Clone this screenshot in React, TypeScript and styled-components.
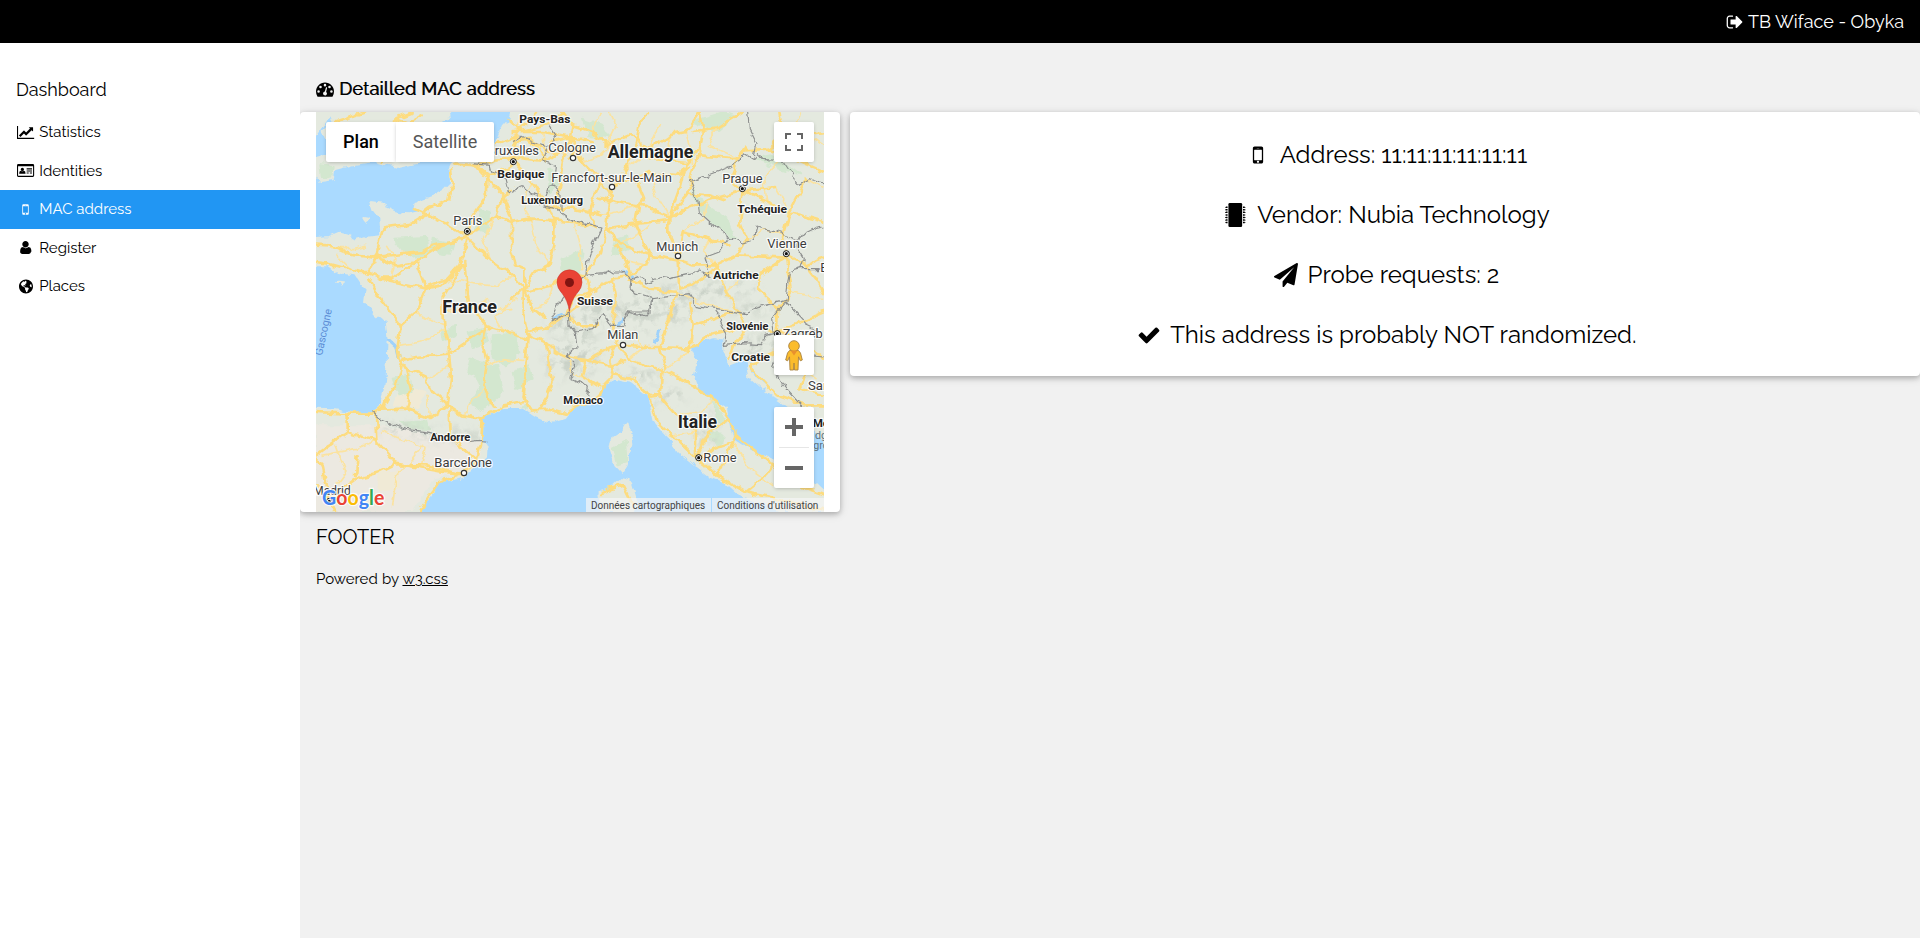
import React from "react";
import styled, { createGlobalStyle, css } from "styled-components";
import { FaGlobeAmericas } from "react-icons/fa";

const GlobalStyle = createGlobalStyle`
  *, *::before, *::after { box-sizing: border-box; }
  html, body { margin: 0; height: 100%; background: #f1f1f1; }
  body {
    font-family: Raleway, Lato, sans-serif;
    font-size: 15px;
    line-height: 1.5;
    color: #000;
    overflow: hidden;
  }
  #root { height: 100%; }
`;

const Page = styled.div`
  display: flex;
  flex-direction: column;
  height: 100%;
`;

const TopBar = styled.header`
  display: flex;
  justify-content: flex-end;
  height: 43px;
  padding: 8px 16px;
  background: #000;
  color: #fff;
  font-size: 18px;
`;

const Account = styled.span`
  display: flex;
  align-items: center;
  gap: 5px;
`;

const Body = styled.div`
  display: flex;
  flex: 1;
  min-height: 0;
`;

const Sidebar = styled.nav`
  position: relative;
  z-index: 1;
  width: 300px;
  flex: none;
  background: #fff;
  padding-top: 23px;
`;

const SidebarTitle = styled.h5`
  margin: 10px 0;
  padding: 0 16px;
  font-size: 18px;
  line-height: 27px;
  font-weight: 400;
`;

const MenuItem = styled.a<{ $active?: boolean }>`
  display: flex;
  align-items: center;
  gap: 4px;
  height: 38.5px;
  padding: 0 16px;
  ${(p) =>
    p.$active &&
    css`
      background: #2196f3;
      color: #fff;
    `}
`;

const IconBox = styled.span<{ $size: number; $width?: number }>`
  display: inline-flex;
  justify-content: center;
  align-items: center;
  flex: none;
  width: ${(p) => p.$width ?? p.$size * 1.2857}px;
  height: ${(p) => p.$size}px;
  svg {
    display: block;
    height: ${(p) => p.$size}px;
    fill: currentColor;
    overflow: visible;
  }
`;

const Main = styled.main`
  flex: 1;
  min-width: 0;
`;

const Heading = styled.h5`
  display: flex;
  align-items: center;
  gap: 5px;
  margin: 0;
  padding: 32px 16px 10px;
  height: 69px;
  font-size: 18px;
  line-height: 27px;
  font-weight: 400;
  letter-spacing: 0.28px;
  text-shadow: 0.7px 0 0 #000;
`;

const Row = styled.section`
  display: flex;
  align-items: flex-start;
  gap: 10px;
`;

const Card = styled.div`
  background: #fff;
  border-radius: 4px;
  box-shadow: 0 2px 5px 0 rgba(0, 0, 0, 0.2), 0 2px 10px 0 rgba(0, 0, 0, 0.15);
`;

const MapCard = styled(Card)`
  width: 540px;
  height: 400px;
  padding: 0 16px;
`;

const InfoCard = styled(Card)`
  flex: 1;
  height: 264px;
  padding-top: 25px;
`;

const InfoLine = styled.p`
  display: flex;
  justify-content: center;
  align-items: center;
  gap: 6px;
  height: 36px;
  margin: 0 0 24px;
  font-size: 24px;
  white-space: nowrap;
`;

const Footer = styled.footer`
  padding: 10px 16px;
`;

const FooterTitle = styled.h4`
  margin: 0 0 12px;
  font-size: 20px;
  line-height: 30px;
  font-weight: 400;
`;

const FooterText = styled.p`
  margin: 16px 0;
  word-spacing: 0.4px;
  a { color: inherit; text-decoration: underline; }
`;

/* Map frame and its controls */

const MapFrame = styled.div`
  position: relative;
  width: 508px;
  height: 400px;
  overflow: hidden;
  font-family: Roboto, Arial, sans-serif;
`;

const MapDrawing = styled.svg`
  display: block;
  width: 508px;
  height: 400px;
`;

const Control = styled.div`
  position: absolute;
  right: 10px;
  width: 40px;
  display: flex;
  flex-direction: column;
  align-items: center;
  justify-content: center;
  background: #fff;
  border-radius: 2px;
  box-shadow: 0 1px 4px -1px rgba(0, 0, 0, 0.3);
  svg { display: block; }
`;

const FullscreenControl = styled(Control)`
  top: 10px;
  height: 40px;
`;

const PegmanControl = styled(Control)`
  top: 223px;
  height: 40px;
`;

const ZoomControl = styled(Control)`
  top: 295px;
  height: 81px;
`;

const ZoomButton = styled.div`
  display: flex;
  align-items: center;
  justify-content: center;
  height: 40px;
`;

const ZoomDivider = styled.div`
  width: 30px;
  height: 1px;
  background: #e6e6e6;
`;

const TypeControl = styled.div`
  position: absolute;
  left: 10px;
  top: 10px;
  display: flex;
  height: 40px;
  font-size: 18px;
  line-height: 40px;
`;

const TypeButton = styled.div<{ $selected?: boolean }>`
  width: ${(p) => (p.$selected ? 70 : 98)}px;
  text-align: center;
  background: #fff;
  color: ${(p) => (p.$selected ? "#000" : "#565656")};
  font-weight: ${(p) => (p.$selected ? 500 : 400)};
  border-radius: ${(p) => (p.$selected ? "2px 0 0 2px" : "0 2px 2px 0")};
  box-shadow: 0 1px 4px -1px rgba(0, 0, 0, 0.3);
`;

const Attribution = styled.div`
  position: absolute;
  right: 0;
  bottom: 0;
  display: flex;
  gap: 1px;
  height: 14px;
  font-size: 10px;
  line-height: 15px;
  color: #444;
  white-space: nowrap;
`;

const AttributionItem = styled.span<{ $width: number }>`
  width: ${(p) => p.$width}px;
  padding-left: 5px;
  background: rgba(245, 245, 245, 0.7);
`;

/* Icons */

const Glyph = ({ d, w = 1792 }: { d: string; w?: number }) => (
  <svg viewBox={`0 0 ${w} 1792`}>
    <path fillRule="evenodd" d={d} />
  </svg>
);

const dot = (x: number, y: number, r = 128) =>
  `M${x - r} ${y}a${r} ${r} 0 1 0 ${2 * r} 0a${r} ${r} 0 1 0 ${-2 * r} 0z`;

const CHART =
  "M2048 1536v128h-2048v-1536h128v1408h1920zm-128-1248v435q0 21-19.5 29.5t-35.5-7.5l-121-121-633 633q-10 10-23 10t-23-10l-233-233-416 416-192-192 585-585q10-10 23-10t23 10l233 233 464-464-121-121q-16-16-7.5-35.5t29.5-19.5h435q14 0 23 9t9 23z";
const MOBILE =
  "M976 1408q0-33-23.5-56.5t-56.5-23.5-56.5 23.5-23.5 56.5 23.5 56.5 56.5 23.5 56.5-23.5 23.5-56.5zm208-160v-704q0-13-9.5-22.5t-22.5-9.5h-512q-13 0-22.5 9.5t-9.5 22.5v704q0 13 9.5 22.5t22.5 9.5h512q13 0 22.5-9.5t9.5-22.5zm-192-848q0-16-16-16h-160q-16 0-16 16t16 16h160q16 0 16-16zm288-16v1024q0 52-38 90t-90 38h-512q-52 0-90-38t-38-90v-1024q0-52 38-90t90-38h512q52 0 90 38t38 90z";
const USER =
  "M1536 1405q0 120-73 189.500t-194 69.500h-746q-121 0-194-69.500t-73-189.500q0-53 3.500-103.500t14-109 26.500-108.500 43-97.500 62-81 85.500-53.500 111.500-20q9 0 42 21.500t74.500 48 108 48 69.500 21.500 133.500-21.500 108-48 74.500-48 42-21.500q61 0 111.500 20t85.500 53.500 62 81 43 97.500 26.500 108.500 14 109 3.500 103.500zm-256-893q0 159-112.500 271.500t-271.500 112.500-271.500-112.500-112.500-271.500 112.500-271.500 271.500-112.500 271.500 112.500 112.500 271.500z";
const GAUGE =
  "M1792 1152q0 261-141 483-19 29-54 29h-1402q-35 0-54-29-141-221-141-483 0-182 71-348t191-286 286-191 348-71 348 71 286 191 191 286 71 348z" +
  "M1004 1185l101-382q6-26-7.5-48.5t-38.5-29.5-48 6.5-30 39.5l-101 382q-60 5-107 43.5t-63 98.5q-20 77 20 146t117 89 146-20 89-117q16-60-6-117t-72-91z" +
  dot(256, 1152) + dot(448, 704) + dot(896, 512) + dot(1344, 704) + dot(1536, 1152);
const PLANE =
  "M1764 11q33 24 27 64l-256 1536q-5 29-32 45-14 8-31 8-11 0-24-5l-453-185-242 295q-18 23-49 23-13 0-22-4-19-7-30.5-23.5t-11.5-36.500v-349l864-1059-1069 925-395-162q-37-14-40-55-2-40 32-59l1664-960q15-9 32-9 20 0 36 11z";
const CHECK =
  "M1671 566q0 40-28 68l-724 724-136 136q-28 28-68 28t-68-28l-136-136-362-362q-28-28-28-68t28-68l136-136q28-28 68-28t68 28l294 295 656-657q28-28 68-28t68 28l136 136q28 28 28 68z";
const LOGOUT =
  "M704 1440q0 4 1 20t.5 26.500-3 23.500-10 19.500-20.500 6.500h-320q-119 0-203.500-84.500t-84.500-203.500v-704q0-119 84.500-203.500t203.500-84.500h320q13 0 22.500 9.500t9.500 22.500q0 4 1 20t.5 26.500-3 23.500-10 19.500-20.500 6.500h-320q-66 0-113 47t-47 113v704q0 66 47 113t113 47h312l11.500 1 11.500 3 8 5.500 7 9 2 13.500zm928-544q0 26-19 45l-544 544q-19 19-45 19t-45-19-19-45v-288h-448q-26 0-45-19t-19-45v-384q0-26 19-45t45-19h448v-288q0-26 19-45t45-19 45 19l544 544q19 19 19 45z";

const IdCardIcon = () => (
  <svg viewBox="0 0 2048 1792">
    <path
      fillRule="evenodd"
      d="M160 128h1728q160 0 160 160v1216q0 160-160 160h-1728q-160 0-160-160v-1216q0-160 160-160zM128 384v1120q0 32 32 32h1728q32 0 32-32v-1120z"
    />
    <circle cx="640" cy="768" r="190" />
    <path d="M256 1280q0-340 200-360q184 120 368 0q200 20 200 360z" />
    <path d="M1152 640h640v128h-640zM1152 896h640v110h-640zM1152 1130h250v120h-250zM1530 1130h262v120h-262z" />
  </svg>
);

const ChipIcon = () => (
  <svg viewBox="0 0 1536 1792">
    <rect x="256" y="0" width="1024" height="1792" rx="96" />
    {[256, 448, 640, 832, 1024, 1216, 1408].map((y) => (
      <path key={y} d={`M0 ${y + 40}h64v-40h128v112h-128v-24h-64zM1536 ${y + 40}h-64v-40h-128v112h128v-24h64z`} />
    ))}
  </svg>
);

/* Map data, in thirds of a pixel */

const LAND = [
  "585,0 578,25 560,45 548,75 538,98 505,118 470,138 410,150 403,165 405,215 385,235 345,258 305,272 302,288 325,297 280,307 258,305 235,300 210,290 205,275 165,270 175,300 190,320 193,372 150,378 112,390 100,370 70,362 40,375 0,378 0,460 40,460 75,485 120,490 140,520 155,530 150,570 180,605 212,630 218,680 215,760 205,840 190,890 172,903 120,905 60,895 0,893 0,1200 305,1200 345,1150 365,1110 440,1095 510,1035 512,1000 497,985 500,920 560,885 620,885 660,910 700,927 745,915 760,895 850,855 860,825 895,800 945,810 1000,850 1015,930 1060,980 1090,1020 1140,1060 1180,1090 1230,1110 1280,1155 1320,1165 1400,1200 1524,1200 1524,1145 1480,1105 1420,1080 1370,1045 1310,1020 1255,985 1240,950 1230,890 1190,860 1145,835 1130,790 1140,750 1125,715 1140,690 1200,675 1225,680 1225,720 1245,755 1270,745 1280,720 1310,765 1350,810 1355,840 1400,870 1440,900 1500,960 1524,990 1524,0",
  "0,0 405,0 385,25 350,45 320,80 290,120 303,153 245,165 180,148 110,160 55,175 50,205 10,210 0,190 0,140 40,130 40,110 30,90 20,60 50,30 40,10 0,70",
  "935,935 941,965 946,1000 932,1060 918,1082 895,1058 880,1010 884,985 920,962",
  "925,1098 945,1110 960,1160 955,1200 858,1200 850,1140 890,1130",
  "1290,745 1310,790 1350,825 1340,830 1300,795",
  "70,512 84,514 80,520",
  "145,318 158,320 150,326",
];

const FORESTS = [
  "235,380 330,375 335,425 300,440 240,400", "350,380 410,390 400,425 345,415", "455,660 510,650 520,690 470,705",
  "460,740 510,755 495,790 450,780", "530,670 600,665 610,720 570,760 530,740", "470,770 540,760 560,840 500,895 460,870 490,820",
  "375,655 420,645 420,670 380,690", "590,780 640,760 650,800 600,830", "230,800 280,790 290,840 250,850",
  "740,440 800,420 790,480 735,470", "250,930 330,925 340,955 280,950", "490,290 520,300 515,360 480,350",
  "1130,230 1160,270 1240,330 1260,380 1210,350 1150,290", "800,20 860,40 880,75 820,70", "1230,0 1260,10 1200,60 1130,30",
  "1180,960 1220,965 1215,1000 1180,990", "890,1010 930,990 935,1050 905,1060", "700,170 740,200 700,240", "1320,140 1370,130 1450,190 1390,170",
  "10,160 50,165 45,200 15,195", "590,900 640,880 630,905", "1190,860 1230,930 1210,940", "900,380 930,370 940,410 890,430",
];

const SPAIN = "0,940 200,940 330,970 490,985 495,1030 430,1080 350,1105 290,1200 0,1200";
const PLAINS = ["180,1080 260,1075 250,1130 190,1140", "260,820 330,840 300,890 230,880"];

const HILLS: [number, number, number, number][] = [
  [780, 640, 90, 26], [880, 590, 100, 26], [1000, 580, 90, 32], [1120, 540, 120, 22], [1230, 530, 100, 20], [730, 740, 40, 60],
  [800, 730, 50, 60], [1080, 600, 60, 30], [980, 640, 50, 22], [400, 970, 110, 16], [960, 790, 70, 16], [1050, 850, 60, 20],
  [1170, 950, 30, 50], [1330, 700, 50, 30], [250, 950, 60, 14], [1300, 590, 80, 14],
];

const ROADS = [
  "455,362 470,310 512,250 515,190 480,160 415,155", "455,375 400,340 370,325 300,292", "325,297 340,285 400,262 410,215 405,175",
  "450,375 350,402 320,420 205,432 180,435 100,425 40,400 0,398", "180,435 198,360 210,345 290,335 340,305",
  "180,435 155,480 195,500 225,500 302,450 375,400 450,380", "180,435 240,460 302,450 330,525", "155,480 130,480 40,455 0,450",
  "330,525 395,500 430,460 455,385", "195,500 330,530 380,520 440,460", "330,525 300,600 255,640 245,700 255,745", "160,500 200,570 255,640",
  "445,450 455,570 510,640 560,655 630,680", "460,385 520,440 590,490 620,530 620,600 635,670", "455,370 540,315 585,330 640,320 715,325 770,330 840,345",
  "585,330 585,410 600,460 625,470 625,540", "715,330 715,400 700,460 660,480 625,535", "620,540 710,520 760,480 805,490", "540,315 560,260 590,230",
  "590,560 620,530 650,590 690,620", "635,670 630,740 620,850 650,895", "630,870 560,880 500,920 495,1000 480,1050 440,1085",
  "640,670 690,690 720,720 750,735 815,745", "640,660 680,650 710,632 750,605 770,560 820,540", "690,690 700,760 710,800 690,860 670,890",
  "620,850 650,895 700,893 745,905 800,880 850,852 865,820 895,790 960,805 1000,850 1015,890 1025,930 1090,990 1140,1040 1200,1090 1290,1140 1380,1160 1524,1195",
  "255,745 270,770 330,800 350,840 395,880 440,910 500,920", "395,880 345,918 270,890 190,893", "260,750 240,820 190,893 170,905 90,905 0,900",
  "395,880 405,800 397,690 385,640 380,560 440,460", "255,745 300,735 400,725 510,650", "510,640 500,700 515,760 505,820 530,880", "270,770 285,830 275,885",
  "95,910 95,960 180,985 240,1055 370,1078 440,1085", "95,960 40,1000 0,1030", "40,1160 120,1100 180,1085 240,1055", "180,905 185,1000", "440,1085 370,1112 340,1150 310,1200",
  "40,1160 0,1120", "40,1160 60,1200", "440,1085 480,1040 405,980 400,885", "240,1060 330,1060 440,1090", "40,1160 20,1060 0,1040", "120,1090 125,1030",
  "590,135 480,162", "590,135 690,148 770,80", "590,145 650,210 700,290 715,325", "590,135 605,60 640,30 660,0", "590,60 680,60 770,75", "585,95 640,80 700,120 770,120",
  "515,190 580,170 590,135", "575,20 620,60 690,40 740,0", "540,95 600,70 660,100 690,150", "700,290 770,290 860,310", "480,165 560,250 590,330",
  "770,40 830,60 870,100 940,70 1000,110 1060,70 1110,60 1150,0", "770,75 800,150 850,200 882,245", "770,75 740,150 730,240 720,290", "740,0 770,40 760,80 790,110 760,140", "700,90 760,75 830,85",
  "882,245 930,170 960,100 970,40 1000,0", "882,245 870,350 855,420 820,470 808,490", "870,350 960,335 1050,325 1120,245 1125,190 1150,120",
  "860,200 830,260 820,300 840,345", "850,260 900,270 970,280 1060,315 1180,265 1280,235", "880,350 910,395 1000,430 1085,445", "1085,430 1060,380 1060,315 1090,230 1110,150 1150,110 1160,40 1150,0",
  "880,200 940,210 1000,180 1090,190 1120,160", "960,110 1000,140 1110,150", "900,400 930,450 940,490", "1000,430 990,460 945,485", "960,200 985,260 970,280 960,340 1000,430",
  "1085,445 1130,460 1200,460 1260,430 1410,437", "1120,245 1180,250 1225,265", "1085,445 1100,360 1180,380 1240,400", "1200,460 1230,540 1270,600 1290,640",
  "1410,437 1330,490 1330,540 1390,590 1385,655", "1410,437 1425,540 1390,590", "1280,235 1350,270 1420,300 1400,370 1412,430", "1280,235 1240,200 1260,150 1290,110", "1290,235 1380,225", "1280,235 1270,330 1290,380 1260,430",
  "1150,130 1270,140 1290,115 1360,110 1400,75 1524,60", "1130,60 1200,50 1280,0", "1360,110 1410,130 1524,180", "1400,75 1390,0", "1420,300 1450,240 1470,200", "1420,300 1524,330", "1412,430 1470,460 1524,440", "1460,450 1500,500 1524,540",
  "1085,445 1090,530 1130,520 1200,470", "940,500 1000,530 1080,540 1060,620 1035,700", "900,700 980,705 1035,705 1120,710 1180,670 1230,655 1290,640 1385,660 1524,600",
  "815,745 860,720 900,700", "900,700 940,740 1040,775 1130,820 1200,865 1240,920 1260,970 1370,1060 1470,1130 1524,1150", "1040,775 1030,850 1080,910 1140,960 1140,1040",
  "1030,850 1000,855", "895,700 880,740 890,790", "815,745 800,790 850,825", "820,745 890,760 930,745", "710,632 760,600", "755,605 780,640 840,640", "820,540 890,500 940,492", "808,490 820,540 800,570 760,600",
  "890,500 900,560 890,620 905,700", "1035,705 1050,770", "1120,710 1130,640 1200,620 1250,600", "1130,640 1120,570", "1290,640 1260,690 1240,740", "1385,660 1380,720 1300,760", "1300,760 1380,850 1470,880 1524,880",
  "1140,1050 1190,1010 1250,990", "1200,1090 1230,1040 1260,970", "1140,1040 1180,960 1240,920", "1385,655 1450,680 1524,740", "1480,760 1450,830 1524,850", "1290,1140 1340,1100 1370,1060",
  "190,60 240,20 290,0", "240,20 330,60", "40,120 110,140 200,80 320,10", "40,120 60,30 150,0", "200,150 230,100 300,80", "860,1140 920,1120 950,1180",
];

const LANES = [
  "40,410 110,410 150,400", "100,470 60,430", "225,500 240,440 215,400", "395,500 455,510 540,520 590,490", "380,600 455,590 520,560", "455,570 500,600 590,590", "300,600 385,640", "245,700 320,690 385,650",
  "515,760 560,740 620,745", "330,800 400,760", "345,918 330,850", "440,910 470,860 510,830", "560,655 540,620 600,560", "540,315 500,380 520,440", "640,320 620,270 650,210", "650,590 700,560 710,520", "200,960 330,1010 320,1060",
  "60,1000 90,1080 60,1120", "320,1000 240,1100 230,1180", "20,1030 120,1010 180,985", "700,460 660,400 640,320", "770,330 790,400 800,470", "800,150 850,130 880,100", "930,170 1000,120", "1000,180 1020,250 1060,315",
  "910,395 960,370 1000,340", "930,450 980,460", "1100,360 1160,320 1180,265", "1200,460 1160,420 1180,380", "1350,270 1340,200 1410,130", "1290,380 1350,350 1400,370", "1330,490 1270,500 1230,540", "1380,225 1400,260 1420,300",
  "1470,200 1524,230", "1425,540 1524,560", "1080,540 1180,580 1270,600", "980,705 960,660", "1050,770 1090,740 1120,710", "940,740 980,705", "1080,910 1150,900 1200,865", "1140,960 1060,970", "1250,990 1300,1070 1370,1120", "860,310 900,300 970,280",
  "680,60 690,150", "1060,70 1060,150", "1110,60 1130,150", "830,60 850,0", "870,100 900,40 880,0", "1000,110 1030,40", "750,735 770,780 810,800", "1450,680 1440,760 1500,800", "1200,50 1180,100 1270,140", "1450,0 1440,40 1524,100", "760,895 790,850", "610,20 590,100 640,130",
];

const BORDERS = [
  "478,155 520,160 525,180 570,200 580,240 620,225 635,238 670,250 665,280 720,292 770,325 855,345 830,400 812,450 810,490 870,485 880,470 895,480 920,480 945,500 942,530 955,545 990,555 1010,560 1005,600 930,600 920,625",
  "700,40 720,70 700,100 680,150 715,160 710,220 735,250 735,290", "595,85 620,75 650,90 690,100", "690,250 700,222 720,225",
  "810,490 780,510 740,560 705,630 760,600 762,640 775,660 830,650 860,605 885,640 920,640 935,600 985,615 1010,580",
  "775,660 780,710 750,735 775,760 765,800 820,825 815,850", "172,900 200,925 270,955 345,965 400,975 445,990 480,985 510,987",
  "1295,0 1300,50 1320,90 1310,140 1290,128 1275,145 1250,160 1200,180 1120,210 1145,260 1150,300 1215,360 1240,375 1280,390 1310,380 1320,345 1370,355 1430,375 1450,410",
  "1310,140 1325,125 1340,145 1400,150 1430,195 1450,220 1480,200 1524,215", "1240,375 1210,420 1170,435 1185,490 1150,480 1060,500 1030,495 990,510 960,490 945,500",
  "1010,560 1120,545 1140,580 1200,590 1290,605 1350,580 1410,565 1420,480 1455,470 1465,440 1440,400 1450,375 1500,350 1524,345", "1455,470 1510,470",
  "1200,595 1220,620 1210,640 1230,670 1225,700", "1225,700 1280,695 1340,698 1350,670 1375,665 1370,620 1410,570", "1410,570 1470,635 1524,660", "1524,735 1470,730 1380,735 1370,765 1400,820 1460,885",
];

const LABELS: { t: string; x: number; y: number; w: number; s: number; b?: boolean }[] = [
  { t: "Pays-Bas", x: 610, y: 33, w: 153, s: 35, b: true },
  { t: "Allemagne", x: 875, y: 138, w: 257, s: 53, b: true },
  { t: "Bruxelles", x: 512, y: 128, w: 157, s: 39 },
  { t: "Belgique", x: 544, y: 198, w: 141, s: 35, b: true },
  { t: "Cologne", x: 697, y: 119, w: 143, s: 39 },
  { t: "Francfort-sur-le-Main", x: 706, y: 209, w: 362, s: 39 },
  { t: "Luxembourg", x: 616, y: 276, w: 185, s: 35, b: true },
  { t: "Paris", x: 412, y: 338, w: 87, s: 39 },
  { t: "Munich", x: 1021, y: 416, w: 126, s: 39 },
  { t: "Prague", x: 1219, y: 212, w: 121, s: 39 },
  { t: "Tchéquie", x: 1264, y: 304, w: 149, s: 35, b: true },
  { t: "Vienne", x: 1354, y: 407, w: 118, s: 39 },
  { t: "Autriche", x: 1192, y: 502, w: 136, s: 35, b: true },
  { t: "France", x: 379, y: 603, w: 164, s: 53, b: true },
  { t: "Suisse", x: 783, y: 579, w: 108, s: 35, b: true },
  { t: "Milan", x: 874, y: 680, w: 93, s: 39 },
  { t: "Slovénie", x: 1231, y: 654, w: 126, s: 35, b: true },
  { t: "Zagreb", x: 1400, y: 679, w: 120, s: 39 },
  { t: "Croatie", x: 1246, y: 747, w: 116, s: 35, b: true },
  { t: "Monaco", x: 742, y: 876, w: 119, s: 35, b: true },
  { t: "Italie", x: 1085, y: 948, w: 118, s: 53, b: true },
  { t: "Rome", x: 1162, y: 1049, w: 100, s: 39 },
  { t: "Andorre", x: 343, y: 987, w: 120, s: 35, b: true },
  { t: "Barcelone", x: 355, y: 1064, w: 173, s: 39 },
  { t: "Madrid", x: -8, y: 1150, w: 112, s: 37 },
  { t: "Sarajevo", x: 1476, y: 833, w: 150, s: 37 },
  { t: "Monténégro", x: 1490, y: 945, w: 190, s: 33, b: true },
  { t: "B", x: 1513, y: 479, w: 24, s: 37 },
];

const CAPITALS = [[592, 149], [454, 358], [1279, 230], [1411, 425], [1384, 665], [1148, 1037], [40, 1168]];
const CITIES = [[771, 138], [888, 225], [1086, 432], [921, 699], [444, 1083]];

const Lines = ({ items, ...rest }: { items: string[] } & React.SVGProps<SVGGElement>) => (
  <g fill="none" strokeLinejoin="round" strokeLinecap="round" {...rest}>
    {items.map((points) => (
      <polyline key={points} points={points} />
    ))}
  </g>
);

const EuropeMap = () => (
  <MapDrawing viewBox="0 0 1524 1200" preserveAspectRatio="none">
    <defs>
      <filter id="rough" filterUnits="userSpaceOnUse" x="-40" y="-40" width="1604" height="1280" colorInterpolationFilters="sRGB">
        <feTurbulence type="fractalNoise" baseFrequency="0.03" numOctaves="3" seed="4" />
        <feDisplacementMap in="SourceGraphic" scale="24" xChannelSelector="R" yChannelSelector="G" />
      </filter>
      <filter id="relief" filterUnits="userSpaceOnUse" x="0" y="0" width="1524" height="1200" colorInterpolationFilters="sRGB">
        <feTurbulence type="fractalNoise" baseFrequency="0.035" numOctaves="3" seed="9" result="n" />
        <feColorMatrix in="n" values="0 0 0 0 0.79  0 0 0 0 0.82  0 0 0 0 0.78  4 0 0 0 -1.8" result="shade" />
        <feGaussianBlur in="SourceAlpha" stdDeviation="12" result="soft" />
        <feComposite in="shade" in2="soft" operator="in" />
      </filter>
      <clipPath id="land">
        {LAND.map((p) => (
          <polygon key={p} points={p} />
        ))}
      </clipPath>
    </defs>
    <rect width="1524" height="1200" fill="#aadaff" />
    <g filter="url(#rough)">
      <g fill="#e4e9df" stroke="#e4e9df" strokeWidth="6" strokeLinejoin="round">
        {LAND.map((p) => (
          <polygon key={p} points={p} />
        ))}
        <path d="M1524 0h40v1000h-40zM1524 1145h40v60h-40zM-40 380h40v80h-40zM-40 895h40v345h-40zM0 1200h300v40h-300zM585 0v-40h940v40zM0 0v-40h405v40z" />
      </g>
      <g clipPath="url(#land)">
        <polygon points={SPAIN} fill="#ece9e1" />
        {PLAINS.map((p) => (
          <polygon key={p} points={p} fill="#f0ead6" />
        ))}
        {FORESTS.map((p) => (
          <polygon key={p} points={p} fill="#d3e7cf" strokeLinejoin="round" stroke="#d3e7cf" strokeWidth="6" />
        ))}
        <g filter="url(#relief)">
          {HILLS.map(([x, y, rx, ry]) => (
            <ellipse key={`${x}-${y}`} cx={x} cy={y} rx={rx} ry={ry} />
          ))}
        </g>
      </g>
      <path
        d="M925 478l28 16M712 628q20-28 48-24M1018 695l10-48M215 680l30 28l8 30M905 640l15-22"
        fill="none"
        stroke="#9fd2fb"
        strokeWidth="9"
      />
      <Lines items={LANES} stroke="#fbe3a0" strokeWidth={5} />
      <Lines items={ROADS} stroke="#fddc7f" strokeWidth={8} />
      <Lines items={BORDERS} stroke="#8d8f8e" strokeWidth={3.4} />
    </g>

    {CITIES.map(([x, y]) => (
      <circle key={x} cx={x} cy={y} r="8" fill="#fff" stroke="#333" strokeWidth="3.5" />
    ))}
    {CAPITALS.map(([x, y]) => (
      <g key={x}>
        <circle cx={x} cy={y} r="9" fill="#fff" stroke="#111" strokeWidth="3" />
        <circle cx={x} cy={y} r="4.8" fill="#111" />
      </g>
    ))}
    <g fontFamily="Roboto, Arial, sans-serif" paintOrder="stroke" stroke="#fff" strokeOpacity="0.85" strokeWidth="7" strokeLinejoin="round">
      {LABELS.map((l) => (
        <text
          key={l.t}
          x={l.x}
          y={l.y}
          fontSize={l.s}
          fontWeight={l.b ? 700 : 400}
          fill={l.b ? "#222" : "#3c3c3c"}
          textLength={l.w}
          lengthAdjust="spacingAndGlyphs"
        >
          {l.t}
        </text>
      ))}
    </g>
    <g fontFamily="Roboto, Arial, sans-serif" fill="#5c8dd6">
      <text fontSize="32" textLength="142" transform="translate(18 732) rotate(-78)">
        Gascogne
      </text>
    </g>
    <g fontFamily="Roboto, Arial, sans-serif" fontSize="32" fill="#5f7480">
      <text x="1497" y="982">dgorica</text>
      <text x="1492" y="1010">grca</text>
    </g>

    <path
      d="M760 598Q756 566 738 544Q723 528 723 511A37.500 37.500 0 0 1 798 511Q798 528 783 544Q765 566 760 598Z"
      fill="#ea4335"
      stroke="#c5332b"
      strokeWidth="1.5"
    />
    <circle cx="760.5" cy="511.500" r="13.500" fill="#811411" />

    <text
      x="18"
      y="1178"
      fontFamily="Lato, sans-serif"
      fontSize="60"
      fontWeight="700"
      textLength="187"
      lengthAdjust="spacingAndGlyphs"
      paintOrder="stroke"
      stroke="#fff"
      strokeOpacity="0.8"
      strokeWidth="7"
    >
      <tspan fill="#4285f4">G</tspan>
      <tspan fill="#ea4335">o</tspan>
      <tspan fill="#fbbc05">o</tspan>
      <tspan fill="#4285f4">g</tspan>
      <tspan fill="#34a853">l</tspan>
      <tspan fill="#ea4335">e</tspan>
    </text>
  </MapDrawing>
);

const PegmanIcon = () => (
  <svg width="18" height="31" viewBox="0 0 18 31">
    <g fill="#fbbc2c" stroke="#a98240" strokeWidth="0.9" strokeLinejoin="round">
      <path d="M4.500 10.500h9l2 2.500l1.800 7l-2 .8l-1.800-4l-.5 13.200h-3.500l-.5-7l-.5 7h-3.500l-.5-13.200l-1.800 4l-2-.8l1.800-7z" />
      <circle cx="9" cy="6" r="5.300" />
    </g>
    <path d="M5.500 10.500h7l-3.500 5z" fill="#e8912d" />
  </svg>
);

const MENU: { label: string; icon: React.ReactNode; active?: boolean }[] = [
  { label: "Statistics", icon: <Glyph d={CHART} w={2048} /> },
  { label: "Identities", icon: <IdCardIcon /> },
  { label: "MAC address", icon: <Glyph d={MOBILE} />, active: true },
  { label: "Register", icon: <Glyph d={USER} /> },
  { label: "Places", icon: <FaGlobeAmericas size={14} /> },
];

const DETAILS: { text: string; icon: React.ReactNode }[] = [
  { text: "Address: 11:11:11:11:11:11", icon: <Glyph d={MOBILE} /> },
  { text: "Vendor: Nubia Technology", icon: <ChipIcon /> },
  { text: "Probe requests: 2", icon: <Glyph d={PLANE} /> },
  { text: "This address is probably NOT randomized.", icon: <Glyph d={CHECK} /> },
];

export default function App() {
  return (
    <Page>
      <GlobalStyle />
      <TopBar>
        <Account>
          <IconBox $size={18} $width={17}>
            <Glyph d={LOGOUT} w={1664} />
          </IconBox>
          TB Wiface - Obyka
        </Account>
      </TopBar>
      <Body>
        <Sidebar>
          <SidebarTitle>Dashboard</SidebarTitle>
          {MENU.map((item) => (
            <MenuItem key={item.label} $active={item.active}>
              <IconBox $size={15}>{item.icon}</IconBox>
              {item.label}
            </MenuItem>
          ))}
        </Sidebar>
        <Main>
          <Heading>
            <IconBox $size={18} $width={18}>
              <Glyph d={GAUGE} />
            </IconBox>
            Detailled MAC address
          </Heading>
          <Row>
            <MapCard>
              <MapFrame>
                <EuropeMap />
                <TypeControl>
                  <TypeButton $selected>Plan</TypeButton>
                  <TypeButton>Satellite</TypeButton>
                </TypeControl>
                <FullscreenControl>
                  <svg width="18" height="18" viewBox="0 0 18 18" fill="#666">
                    <path d="M0 0v6h2V2h4V0zM16 0h-4v2h4v4h2V0zM16 16h-4v2h6v-6h-2zM2 12H0v6h6v-2H2z" />
                  </svg>
                </FullscreenControl>
                <PegmanControl>
                  <PegmanIcon />
                </PegmanControl>
                <ZoomControl>
                  <ZoomButton>
                    <svg width="18" height="18" viewBox="0 0 18 18" fill="#666">
                      <path d="M18 7h-7V0H7v7H0v4h7v7h4v-7h7z" />
                    </svg>
                  </ZoomButton>
                  <ZoomDivider />
                  <ZoomButton>
                    <svg width="18" height="18" viewBox="0 0 18 18" fill="#666">
                      <path d="M0 7h18v4H0z" />
                    </svg>
                  </ZoomButton>
                </ZoomControl>
                <Attribution>
                  <AttributionItem $width={125}>Données cartographiques</AttributionItem>
                  <AttributionItem $width={112}>Conditions d'utilisation</AttributionItem>
                </Attribution>
              </MapFrame>
            </MapCard>
            <InfoCard>
              {DETAILS.map((line) => (
                <InfoLine key={line.text}>
                  <IconBox $size={24}>{line.icon}</IconBox>
                  {line.text}
                </InfoLine>
              ))}
            </InfoCard>
          </Row>
          <Footer>
            <FooterTitle>FOOTER</FooterTitle>
            <FooterText>
              Powered by <a>w3.css</a>
            </FooterText>
          </Footer>
        </Main>
      </Body>
    </Page>
  );
}
